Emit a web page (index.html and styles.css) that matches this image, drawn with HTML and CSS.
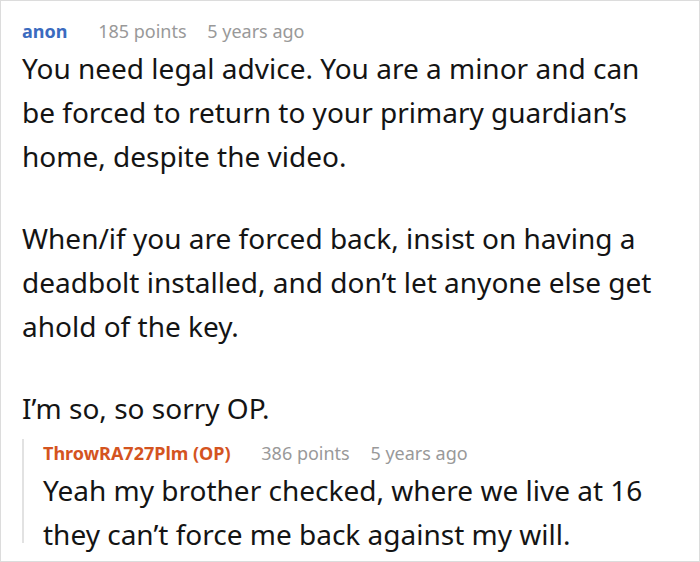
FILE: index.html
```html
<!DOCTYPE html>
<html lang="en">
<head>
  <meta charset="UTF-8">
  <title>Comment thread</title>
  <link rel="stylesheet" href="styles.css">
</head>
<body>

  <div class="thread">
    <div class="comment">
      <div class="meta">
        <span class="author">anon</span>
        <span class="points">185 points</span>
        <span class="age">5 years ago</span>
      </div>
      <div class="body">
        <p>You need legal advice. You are a minor and can be forced to return to your primary guardian’s home, despite the video.</p>
        <p>When/if you are forced back, insist on having a deadbolt installed, and don’t let anyone else get ahold of the key.</p>
        <p>I’m so, so sorry OP.</p>
      </div>

      <!-- reply -->
      <div class="reply">
        <div class="meta">
          <span class="author op">ThrowRA727Plm (OP)</span>
          <span class="points">386 points</span>
          <span class="age">5 years ago</span>
        </div>
        <div class="body">
          <p>Yeah my brother checked, where we live at 16 they can’t force me back against my will.</p>
        </div>
      </div>
    </div>
  </div>

</body>
</html>
```

FILE: styles.css
```css
body {
  margin: 0;
  padding: 0;
  background-color: #fff;
  font-family: 'Noto Sans', 'Open Sans', sans-serif;
}

.thread {
  width: 700px;
  height: 562px;
  box-sizing: border-box;
  border: 1px solid #dcdcdc;
  padding: 16px 21px 0 21px;
  overflow: hidden;
}

.meta {
  font-size: 18px;
  line-height: 28px;
  color: #999;
  margin-bottom: 1px;
}

.author {
  color: #3b6bbf;
  font-weight: bold;
  margin-right: 26px;
}

.author.op {
  color: #d4541f;
}

.points {
  margin-right: 16px;
}

.body {
  font-size: 28px;
  line-height: 44px;
  color: #141414;
}

.body p {
  margin: 0 0 38px 0;
}

.body p:last-child {
  margin-bottom: 0;
}

.reply {
  position: relative;
  margin-top: 9px;
  padding-left: 21px;
}

/* thread line, stops a bit short of the last line */
.reply::before {
  content: "";
  position: absolute;
  left: 0;
  top: 0;
  bottom: 13px;
  width: 2px;
  background-color: #e2e2e2;
}
```
